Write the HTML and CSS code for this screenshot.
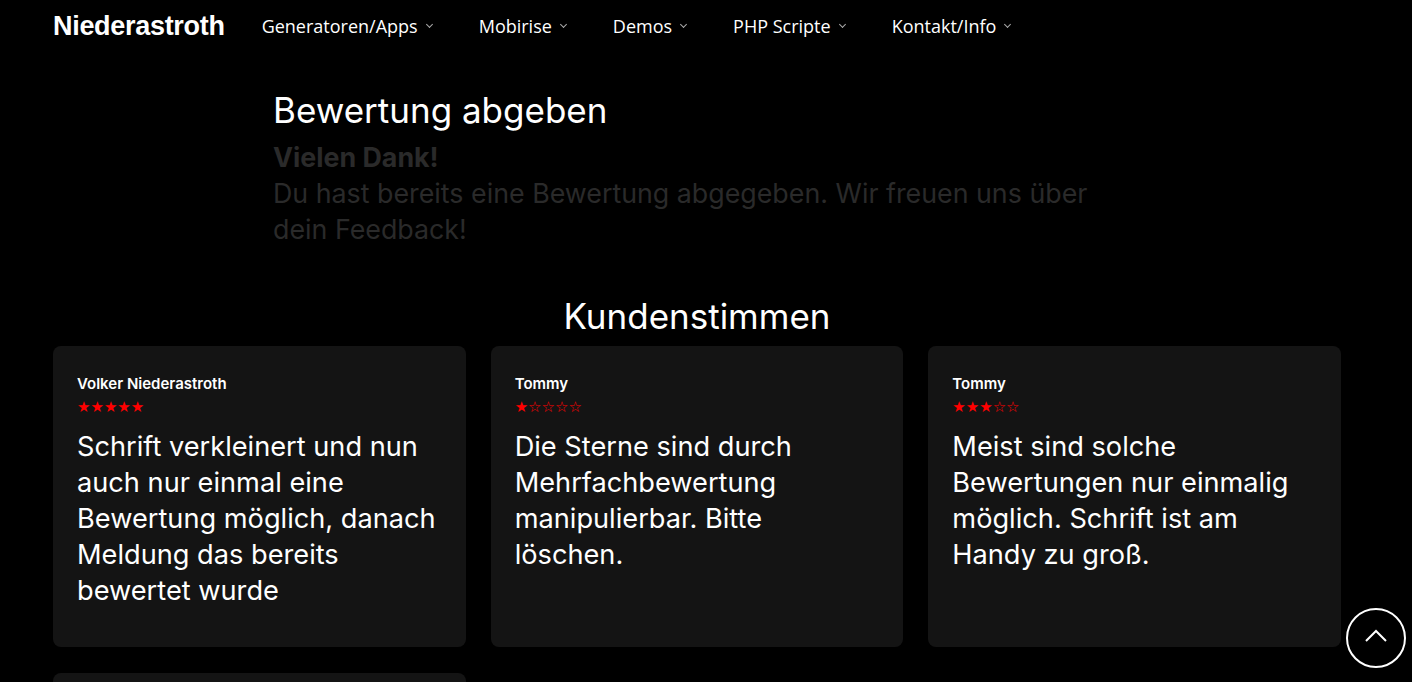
FILE: index.html
```html
<!DOCTYPE html>
<html lang="de">
<head>
<meta charset="utf-8">
<title>Niederastroth</title>
<link rel="stylesheet" href="styles.css">
</head>
<body>
<header class="nav">
  <a class="brand" href="#">Niederastroth</a>
  <ul class="menu">
    <li class="item">Generatoren/Apps <span class="caret"></span></li>
    <li class="item">Mobirise <span class="caret"></span></li>
    <li class="item">Demos <span class="caret"></span></li>
    <li class="item">PHP Scripte <span class="caret"></span></li>
    <li class="item">Kontakt/Info <span class="caret"></span></li>
  </ul>
</header>
<main>
  <section class="rate">
    <h2 class="rate-title">Bewertung abgeben</h2>
    <p class="thanks"><strong>Vielen Dank!</strong><br>Du hast bereits eine Bewertung abgegeben. Wir freuen uns über dein Feedback!</p>
  </section>
  <section class="reviews">
    <h2 class="reviews-title">Kundenstimmen</h2>
    <div class="grid">
      <article class="card">
        <div class="name">Volker Niederastroth</div>
        <div class="stars">★★★★★</div>
        <p class="text">Schrift verkleinert und nun auch nur einmal eine Bewertung möglich, danach Meldung das bereits bewertet wurde</p>
      </article>
      <article class="card">
        <div class="name">Tommy</div>
        <div class="stars">★☆☆☆☆</div>
        <p class="text">Die Sterne sind durch Mehrfachbewertung manipulierbar. Bitte löschen.</p>
      </article>
      <article class="card">
        <div class="name">Tommy</div>
        <div class="stars">★★★☆☆</div>
        <p class="text">Meist sind solche Bewertungen nur einmalig möglich. Schrift ist am Handy zu groß.</p>
      </article>
      <article class="card"></article>
    </div>
  </section>
</main>
<a class="totop" href="#"><svg width="22" height="14" viewBox="0 0 22 14"><path d="M1 12 L11 2 L21 12" fill="none" stroke="#fff" stroke-width="2"/></svg></a>
</body>
</html>
```
FILE: styles.css
```css
html, body { margin: 0; padding: 0; background: #000; color: #fff; }
body { font-family: "Inter", "Noto Sans", sans-serif; overflow: hidden; height: 682px; }
.nav { display: flex; align-items: center; height: 52px; padding: 0 53px; }
.brand { color: #fff; text-decoration: none; font-family: "Liberation Sans", Arial, sans-serif; font-weight: 700; font-size: 27px; letter-spacing: -0.3px; margin-right: 37px; }
.menu { display: flex; list-style: none; margin: 0; padding: 0; gap: 0; }
.item { font-family: "Open Sans", sans-serif; font-size: 18px; color: #fff; margin-right: 47px; display: flex; align-items: center; }
.caret { display: inline-block; width: 4px; height: 4px; border-right: 1px solid #aaa; border-bottom: 1px solid #aaa; transform: rotate(45deg); margin-left: 9px; margin-top: -4px; }
.rate { width: 866px; margin: 0 auto; padding-top: 36px; }
.rate-title { font-weight: 400; font-size: 35px; margin: 0; line-height: 44px; }
.thanks { margin: 7px 0 0 0; color: #2a2a2a; font-size: 26.8px; line-height: 36px; }
.thanks strong { font-weight: 700; }
.reviews { width: 1288px; margin-left: 53px; padding-top: 47px; }
.reviews-title { text-align: center; font-weight: 400; font-size: 35px; margin: 0 0 8px 0; line-height: 44px; }
.grid { display: grid; grid-template-columns: repeat(3, 1fr); column-gap: 25px; row-gap: 26px; }
.card { background: #141414; border-radius: 8px; padding: 28px 28px 0 24px; height: 301px; box-sizing: border-box; }
.name { font-size: 15px; font-weight: 600; line-height: 20px; }
.stars { color: #f00; font-size: 15px; letter-spacing: 0; line-height: 16px; margin-top: 5px; font-family: "DejaVu Sans", sans-serif; }
.text { margin: 14px 0 0 0; font-size: 27.2px; line-height: 36px; }
.totop { position: fixed; right: 6px; bottom: 14px; width: 56px; height: 56px; border: 2px solid #fff; border-radius: 50%; display: flex; align-items: center; justify-content: center; background: #000; }
.totop svg { margin-top: -4px; }
```
